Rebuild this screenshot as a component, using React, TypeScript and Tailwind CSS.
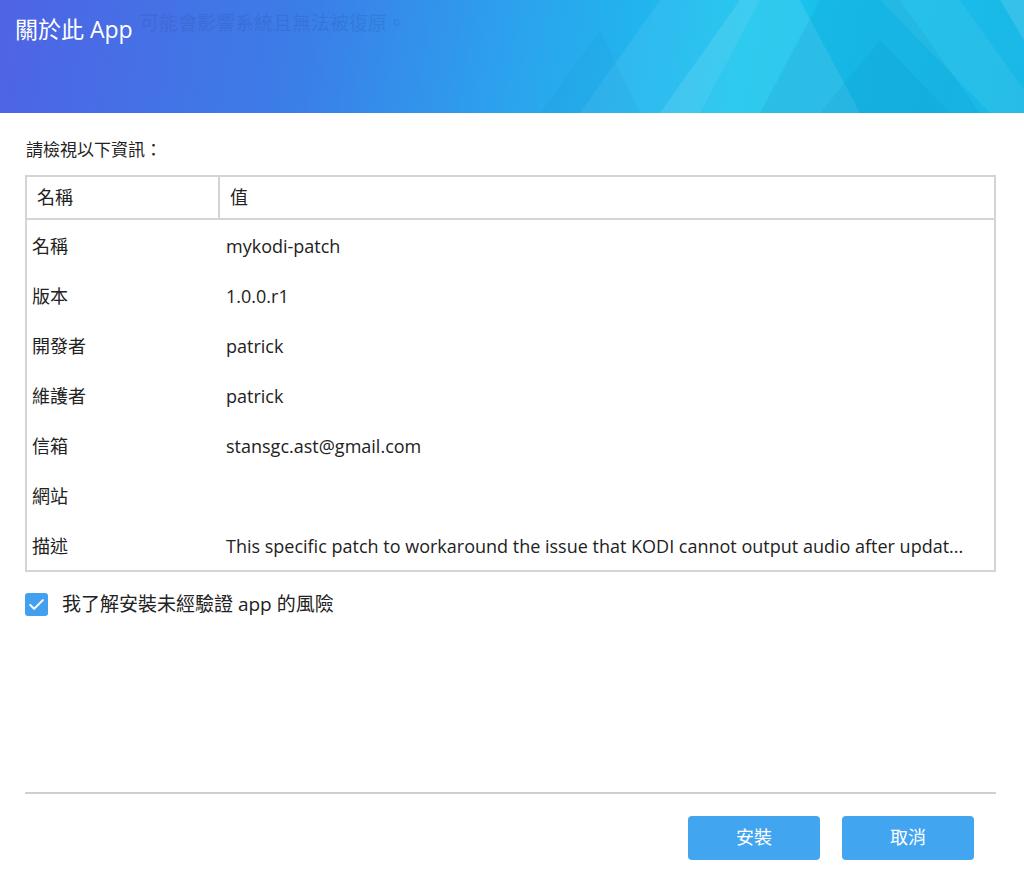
import React from 'react';

const rows: [string, string][] = [
  ['名稱', 'mykodi-patch'],
  ['版本', '1.0.0.r1'],
  ['開發者', 'patrick'],
  ['維護者', 'patrick'],
  ['信箱', 'stansgc.ast@gmail.com'],
  ['網站', ''],
  ['描述', 'This specific patch to workaround the issue that KODI cannot output audio after updat...'],
];

const font = { fontFamily: '"Open Sans", "Noto Sans CJK TC", sans-serif' };

const Header: React.FC = () => (
  <div className="relative h-[113px] overflow-hidden bg-[linear-gradient(100deg,#4f63e4_0%,#3b7ee8_30%,#2aa6ee_52%,#18c4ee_72%,#1ab8e6_100%)]">
    <svg className="absolute inset-0 h-full w-full" viewBox="0 0 1024 113" preserveAspectRatio="none">
      <polygon points="580,113 660,0 760,0 700,113" fill="#ffffff" opacity="0.07" />
      <polygon points="660,113 740,0 800,0 860,113" fill="#ffffff" opacity="0.1" />
      <polygon points="760,113 820,0 900,0 980,113" fill="#0a7fb8" opacity="0.12" />
      <polygon points="820,113 880,40 950,113" fill="#0a7fb8" opacity="0.1" />
      <polygon points="880,0 960,0 1024,90 1024,113 990,113" fill="#ffffff" opacity="0.06" />
      <polygon points="540,113 600,30 640,113" fill="#0a7fb8" opacity="0.08" />
      <polygon points="1000,0 1024,0 1024,40" fill="#ffffff" opacity="0.12" />
    </svg>
    <div className="absolute left-[140px] top-[9px] whitespace-nowrap text-[19px] text-[#1e3a8a] opacity-15">
      可能會影響系統且無法被復原。
    </div>
    <div className="relative pl-[15px] pt-[12px] text-[23px] text-white">關於此 App</div>
  </div>
);

export default function App() {
  return (
    <div className="h-[875px] w-[1024px] bg-white text-[#222]" style={font}>
      <Header />
      <div className="pl-[25px] pr-[28px]">
        <div className="mt-[25px] pl-[1px] text-[17px] leading-[24px]">請檢視以下資訊：</div>
        <div className="mt-[13px] border-2 border-[#d4d4d4]">
          <div className="flex h-[43px] items-center border-b-2 border-[#d4d4d4] text-[18px]">
            <div className="flex h-full w-[193px] items-center border-r-2 border-[#d4d4d4] pl-[10px]">名稱</div>
            <div className="pl-[10px]">值</div>
          </div>
          {rows.map(([k, v]) => (
            <div key={k} className="flex h-[50px] items-center pt-[3px] text-[18px]">
              <div className="w-[199px] shrink-0 pl-[5px]">{k}</div>
              <div className="min-w-0 flex-1 whitespace-nowrap">{v}</div>
            </div>
          ))}
        </div>
        <div className="mt-[18px] flex items-center">
          <div className="flex h-[23px] w-[23px] items-center justify-center rounded-[3px] bg-[#42a0ee]">
            <svg viewBox="0 0 24 24" className="h-[19px] w-[19px]" fill="none" stroke="white" strokeWidth={2.6} strokeLinecap="round" strokeLinejoin="round">
              <path d="M4 12.5l5 5L20 6.5" />
            </svg>
          </div>
          <span className="ml-[14px] text-[19px]">我了解安裝未經驗證 app 的風險</span>
        </div>
        <div className="mt-[173px] h-[2px] bg-[#cfcfcf]" />
        <div className="mt-[22px] flex justify-end gap-[22px] pr-[22px]">
          <button className="h-[44px] w-[132px] rounded-[4px] bg-[#42a5f0] text-[18px] text-white">安裝</button>
          <button className="h-[44px] w-[132px] rounded-[4px] bg-[#42a5f0] text-[18px] text-white">取消</button>
        </div>
      </div>
    </div>
  );
}
